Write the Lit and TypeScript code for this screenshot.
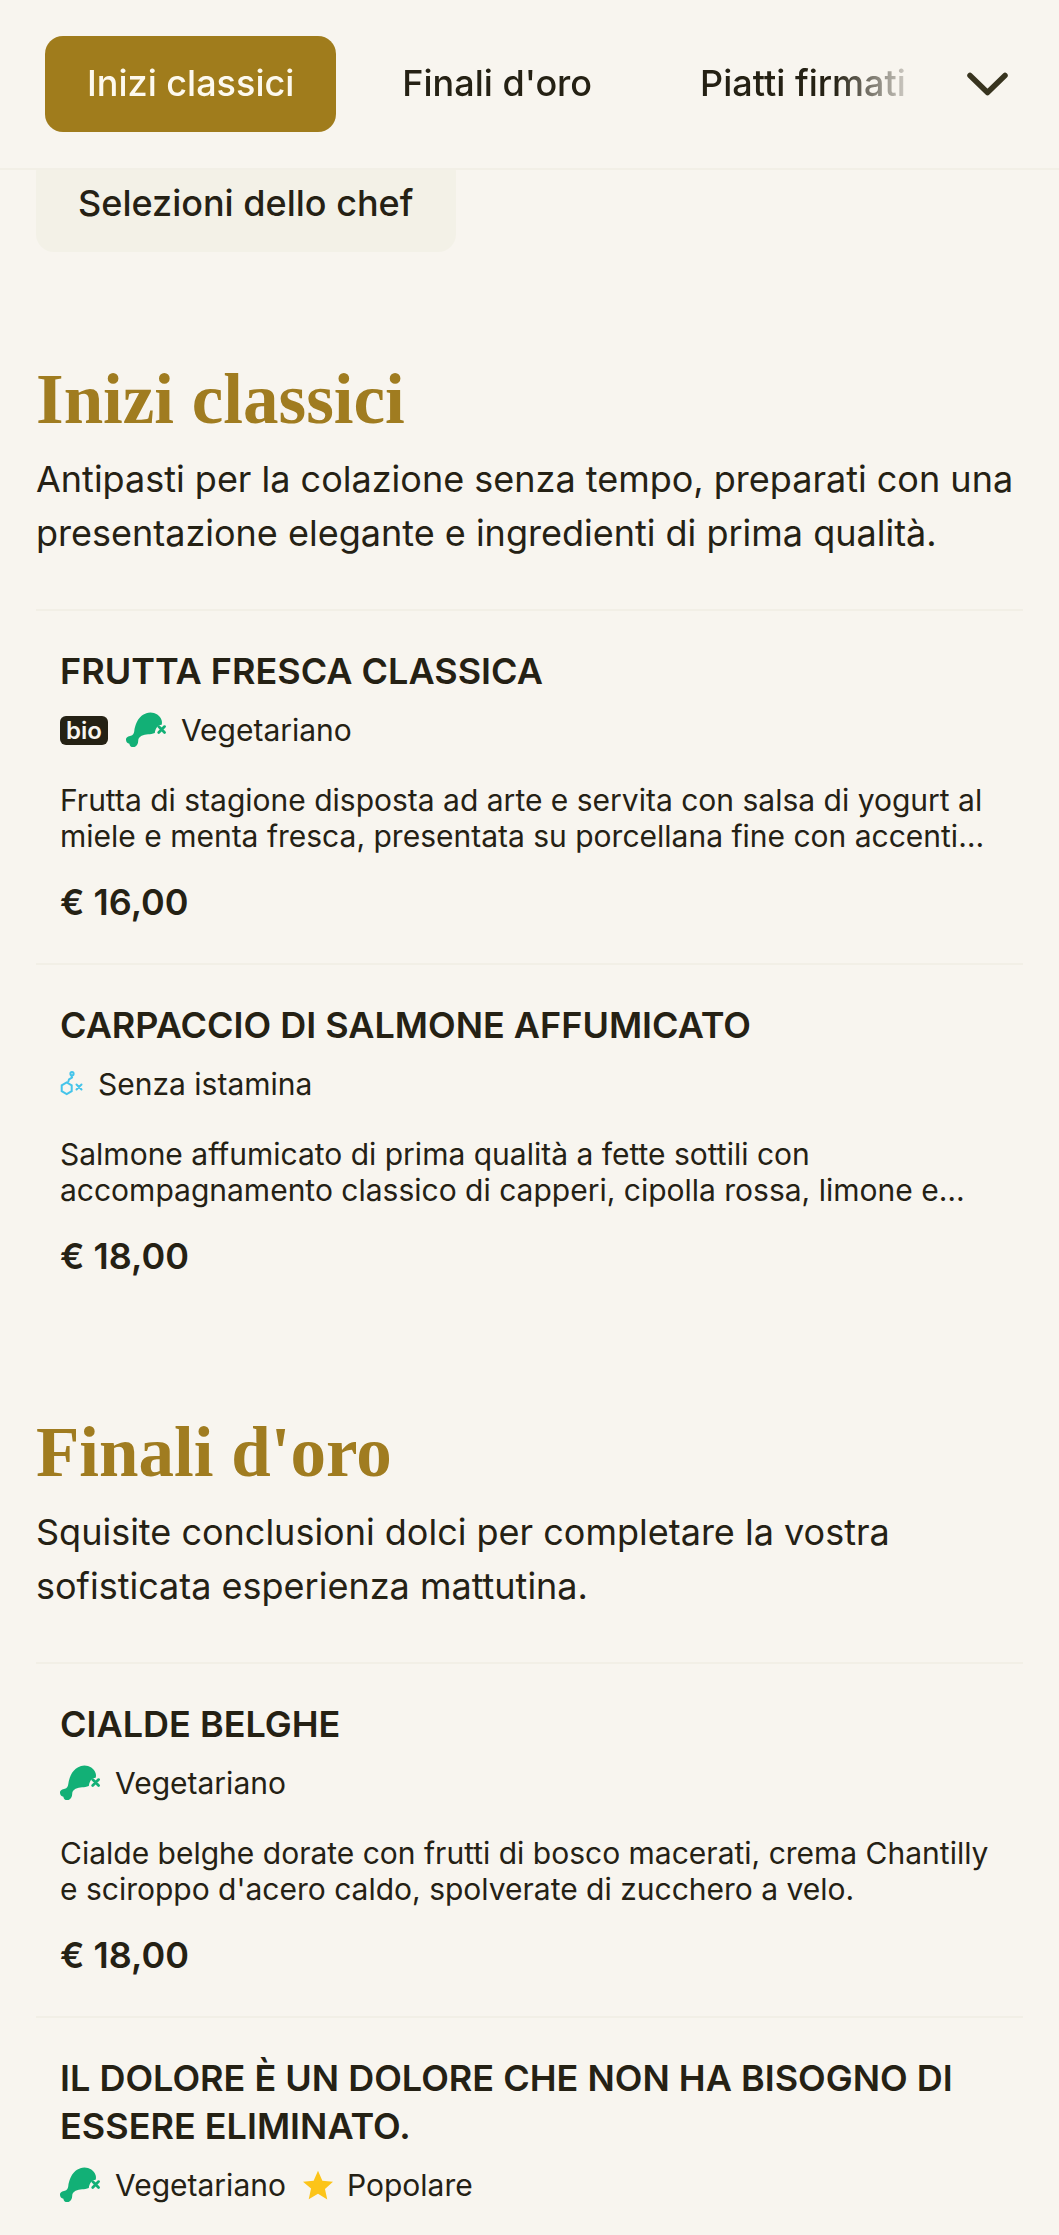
import { LitElement, html, css } from "lit";
import { customElement } from "lit/decorators.js";

const drumstick = html`<svg class="ico veg" viewBox="0 0 42 36" aria-hidden="true">
  <path fill="#12b076" d="M25 0C30 0 35 3 36.500 8C37 10 37 11.500 36.500 12.500C33 12.500 30 16 29.500 21C25 23 20 21.500 16 24C14 25.500 12.500 26.500 12.500 29C12.500 32 11 35.500 7.500 35.500C5 35.500 3.500 34 3.500 32C1.500 32 0 30 0 28C0 25.500 2.500 24.500 5 24C7 23.500 8 22 8.500 19C9.500 12 13 1 25 0Z"/>
  <path stroke="#12b076" stroke-width="2.800" stroke-linecap="round" d="M33.500 14.500l6 6M39.500 14.500l-6 6"/>
</svg>`;

const histamine = html`<svg class="ico his" viewBox="0 0 24 27" aria-hidden="true">
  <g fill="none" stroke="#45c4ea" stroke-width="2">
    <path d="M6.700 11.500l5 2.900v5.800l-5 2.900-5-2.900v-5.800z"/>
    <path d="M8 11.500L9 8.500l3-2-.5-2"/>
    <circle cx="12" cy="2.700" r="1.600"/>
    <path stroke-linecap="round" d="M16.500 13.500l5 5M21.500 13.500l-5 5"/>
  </g>
</svg>`;

const star = html`<svg class="ico star" viewBox="1 1.500 22 21" aria-hidden="true">
  <path fill="#fcc419" d="M12 1.500l3.200 7.300 7.800.8-5.900 5.300 1.700 7.800L12 18.500l-6.800 3.900 1.700-7.800L1 9.600l7.800-.8z"/>
</svg>`;

type Tag = "bio" | "veg" | "his" | "pop";
interface Dish { name: string; tags: Tag[]; desc?: string; price?: string }
interface Section { title: string; intro: string; dishes: Dish[] }

const sections: Section[] = [
  {
    title: "Inizi classici",
    intro: "Antipasti per la colazione senza tempo, preparati con una presentazione elegante e ingredienti di prima qualità.",
    dishes: [
      {
        name: "FRUTTA FRESCA CLASSICA",
        tags: ["bio", "veg"],
        desc: "Frutta di stagione disposta ad arte e servita con salsa di yogurt al miele e menta fresca, presentata su porcellana fine con accenti…",
        price: "€ 16,00",
      },
      {
        name: "CARPACCIO DI SALMONE AFFUMICATO",
        tags: ["his"],
        desc: "Salmone affumicato di prima qualità a fette sottili con accompagnamento classico di capperi, cipolla rossa, limone e…",
        price: "€ 18,00",
      },
    ],
  },
  {
    title: "Finali d'oro",
    intro: "Squisite conclusioni dolci per completare la vostra sofisticata esperienza mattutina.",
    dishes: [
      {
        name: "CIALDE BELGHE",
        tags: ["veg"],
        desc: "Cialde belghe dorate con frutti di bosco macerati, crema Chantilly e sciroppo d'acero caldo, spolverate di zucchero a velo.",
        price: "€ 18,00",
      },
      {
        name: "IL DOLORE È UN DOLORE CHE NON HA BISOGNO DI ESSERE ELIMINATO.",
        tags: ["veg", "pop"],
      },
    ],
  },
];

@customElement("app-root")
export class AppRoot extends LitElement {
  static styles = css`
    :host {
      display: block;
      height: 2235px;
      overflow: hidden;
      background: #f8f5ef;
      color: #252114;
      font-family: Inter, "Liberation Sans", sans-serif;
    }
    header {
      position: relative;
      z-index: 2;
      display: flex;
      align-items: center;
      height: 170px;
      box-sizing: border-box;
      padding: 0 36px 0 45px;
      background: #f8f5ef;
      border-bottom: 2px solid #f2efe6;
    }
    .tabs {
      display: flex;
      gap: 24px;
      flex: 1;
      min-width: 0;
      overflow: hidden;
      -webkit-mask-image: linear-gradient(to right, #000 calc(100% - 90px), transparent 100%);
      mask-image: linear-gradient(to right, #000 calc(100% - 90px), transparent 100%);
    }
    .tab {
      flex: none;
      height: 96px;
      box-sizing: border-box;
      padding: 0 42px 2px;
      display: flex;
      align-items: center;
      border-radius: 18px;
      font-size: 36px;
      font-weight: 500;
      white-space: nowrap;
    }
    .tab.on {
      background: #a07c1c;
      color: #fdf9ee;
    }
    .chev {
      flex: none;
      width: 41px;
      height: 24px;
      margin-left: 43px;
      margin-right: 15px;
    }
    .chip {
      position: relative;
      z-index: 1;
      width: fit-content;
      margin: -16px 0 0 36px;
      height: 98px;
      box-sizing: border-box;
      padding: 0 43px 0 42px;
      display: flex;
      align-items: center;
      border-radius: 18px;
      background: #f3f1e7;
      font-size: 36px;
      font-weight: 500;
    }
    section {
      padding: 102px 36px 0;
    }
    h2 {
      margin: 0;
      font-family: "Liberation Serif", "DejaVu Serif", serif;
      font-size: 71px;
      line-height: 90px;
      font-weight: 700;
      color: #a07c20;
    }
    .intro {
      margin: 8px 0 49px;
      font-size: 36px;
      line-height: 54px;
    }
    .dish {
      border-top: 2px solid #f2efe6;
      padding: 36px 24px 37px;
    }
    .dish:last-child {
      padding-bottom: 25px;
    }
    h3 {
      margin: 0;
      font-size: 36px;
      line-height: 48px;
      font-weight: 600;
    }
    .tags {
      display: flex;
      align-items: center;
      gap: 17px;
      margin-top: 13px;
      height: 44px;
      font-size: 30px;
    }
    .tag {
      display: flex;
      align-items: center;
      gap: 14px;
    }
    .bio {
      background: #252114;
      color: #f8f5ef;
      font-size: 24px;
      font-weight: 600;
      line-height: 29px;
      padding: 0 6px;
      margin-right: 1px;
      border-radius: 6px;
    }
    .ico { flex: none; display: block; }
    .veg { width: 41px; height: 36px; }
    .his { width: 24px; height: 27px; }
    .star { width: 30px; height: 30px; }
    .desc {
      margin: 30px 0 0;
      font-size: 30px;
      line-height: 36px;
    }
    .price {
      margin-top: 24px;
      font-size: 36px;
      line-height: 48px;
      font-weight: 600;
    }
  `;

  private tag(t: Tag) {
    switch (t) {
      case "bio": return html`<span class="bio">bio</span>`;
      case "veg": return html`<span class="tag">${drumstick}Vegetariano</span>`;
      case "his": return html`<span class="tag">${histamine}Senza istamina</span>`;
      case "pop": return html`<span class="tag">${star}Popolare</span>`;
    }
  }

  render() {
    return html`
      <header>
        <nav class="tabs">
          <div class="tab on">Inizi classici</div>
          <div class="tab">Finali d'oro</div>
          <div class="tab">Piatti firmati</div>
        </nav>
        <svg class="chev" viewBox="0 0 41 24" aria-hidden="true">
          <path fill="none" stroke="#38341f" stroke-width="5.500" stroke-linecap="round" stroke-linejoin="round" d="M3 3.500L20.500 20.500L38 3.500"/>
        </svg>
      </header>
      <div class="chip">Selezioni dello chef</div>
      ${sections.map((s) => html`
        <section>
          <h2>${s.title}</h2>
          <p class="intro">${s.intro}</p>
          ${s.dishes.map((d) => html`
            <article class="dish">
              <h3>${d.name}</h3>
              <div class="tags">${d.tags.map((t) => this.tag(t))}</div>
              ${d.desc ? html`<p class="desc">${d.desc}</p>` : ""}
              ${d.price ? html`<div class="price">${d.price}</div>` : ""}
            </article>
          `)}
        </section>
      `)}
    `;
  }
}
